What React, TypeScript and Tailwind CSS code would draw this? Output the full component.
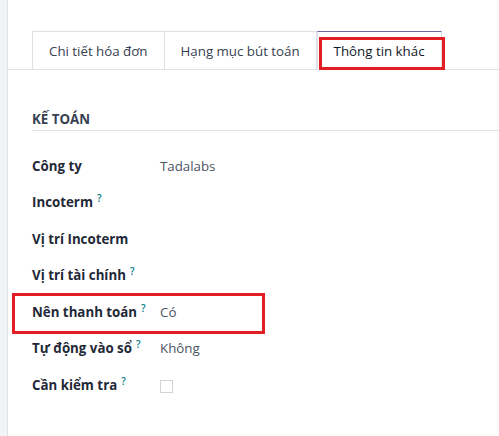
const tabs = ['Chi tiết hóa đơn', 'Hạng mục bút toán', 'Thông tin khác'];

const rows: { label: string; help?: boolean; value?: string; checkbox?: boolean }[] = [
  { label: 'Công ty', value: 'Tadalabs' },
  { label: 'Incoterm', help: true },
  { label: 'Vị trí Incoterm' },
  { label: 'Vị trí tài chính', help: true },
  { label: 'Nên thanh toán', help: true, value: 'Có' },
  { label: 'Tự động vào sổ', help: true, value: 'Không' },
  { label: 'Cần kiểm tra', help: true, checkbox: true },
];

const App = () => {
  return (
    <div
      className="relative flex h-[436px] w-[499px] overflow-hidden bg-white text-[13.3px] text-[#374151]"
      style={{ fontFamily: '"Open Sans", "Noto Sans", sans-serif' }}
    >
      <div className="w-2 shrink-0 border-r border-[#dee2e6] bg-[#f1f3f6]" />
      <div className="flex-1 pt-[31px]">
        <div className="flex border-b border-[#dee2e6] pl-6">
          {tabs.map((t, i) => (
            <div
              key={t}
              className={
                i === 2
                  ? '-mb-px h-[39px] border border-b-white border-[#dee2e6] border-t-[#71639e] bg-white px-[16px] pt-[10px] text-[#111827]'
                  : '-mb-px h-[39px] border border-[#dee2e6] px-[16px] pt-[10px] ' + (i === 1 ? 'border-l-0' : '')
              }
            >
              {t}
            </div>
          ))}
        </div>
        <div className="pl-6 pt-[40px]">
          <div className="border-b border-[#dee2e6] text-[13.3px] font-bold text-[#374151]">KẾ TOÁN</div>
          <div className="pt-[26px]">
            {rows.map((r) => (
              <div key={r.label} className="flex h-[36.5px] items-start">
                <div className="w-[128px] shrink-0 font-bold text-[#1f2937]">
                  {r.label}
                  {r.help && <sup className="ml-1 text-[10px] font-semibold text-[#017e84]">?</sup>}
                </div>
                {r.value && <div className="text-[#4b5563]">{r.value}</div>}
                {r.checkbox && <div className="mt-[4px] h-[13px] w-[13px] border border-[#ced4da] bg-white" />}
              </div>
            ))}
          </div>
        </div>
      </div>
      <div className="absolute left-[319px] top-[37px] h-[33px] w-[126px] border-[3px] border-[#e31e24]" />
      <div className="absolute left-[12px] top-[293px] h-[41px] w-[253px] border-[3px] border-[#e31e24]" />
    </div>
  );
};

export default App;
